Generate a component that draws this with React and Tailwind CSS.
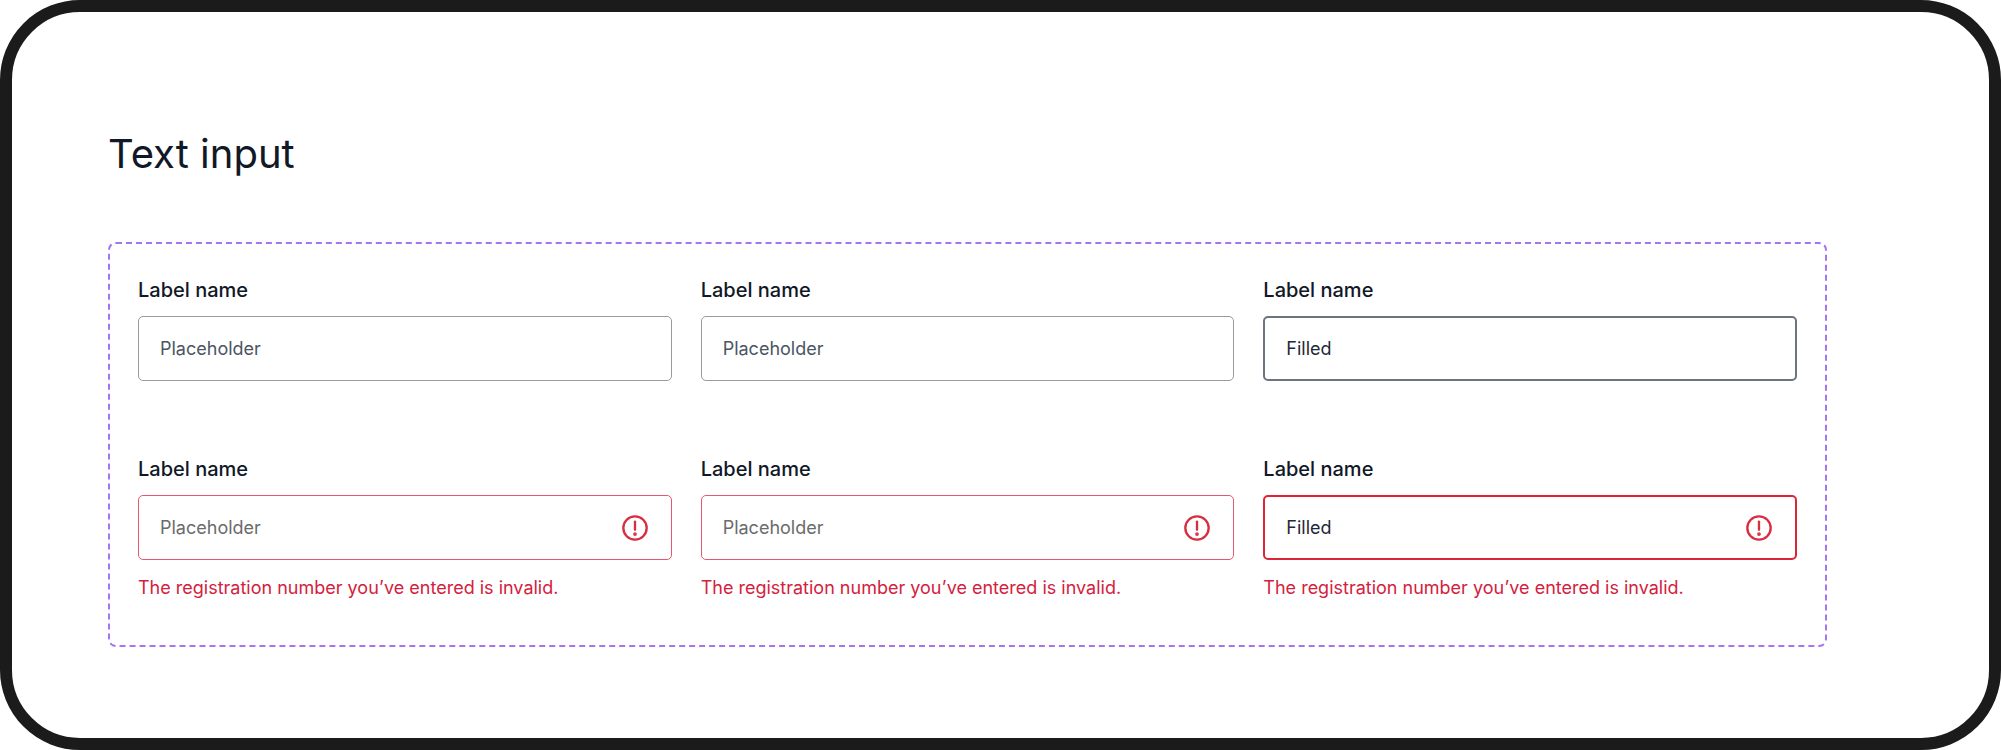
import React from 'react';

const font = { fontFamily: 'Inter, "Noto Sans", sans-serif' };

function AlertIcon() {
  return (
    <svg width="28" height="28" viewBox="0 0 24 24" fill="none" stroke="#d92d41" strokeWidth="2">
      <circle cx="12" cy="12" r="10" />
      <line x1="12" y1="6.5" x2="12" y2="13.5" strokeLinecap="round" />
      <circle cx="12" cy="17.2" r="0.6" fill="#d92d41" />
    </svg>
  );
}

function Field({ value, filled, error }) {
  const border = error
    ? filled ? 'border-[2.5px] border-[#dc2638]' : 'border-[1.5px] border-[#e35a6c]'
    : filled ? 'border-[2.5px] border-[#6b7480]' : 'border-[1.5px] border-[#9a9a9a]';
  return (
    <div className="flex flex-col">
      <p className="text-[20px] font-medium text-[#111827] leading-[24px] mb-[14px]">Label name</p>
      <div className={`h-[65px] rounded-[5px] flex items-center pl-[21px] pr-[22px] ${border}`}>
        <span className={`flex-1 text-[18px] ${filled ? 'text-[#1f2937]' : error ? 'text-[#6b6b6b]' : 'text-[#4b5563]'}`}>{value}</span>
        {error && <AlertIcon />}
      </div>
      {error && <p className="mt-[14px] text-[18px] text-[#d4213d]">The registration number you’ve entered is invalid.</p>}
    </div>
  );
}

export default function App() {
  return (
    <div style={font} className="w-[2001px] h-[750px] bg-white">
      <div className="w-full h-full bg-white border-[12px] border-[#1c1b1b] rounded-[80px] pl-[96px] pt-[118px]">
        <h1 className="text-[40px] text-[#111827] leading-[48px] font-normal">Text input</h1>
        <div className="mt-[64px] w-[1719px] h-[405px] border-2 border-dashed border-[#a574f5] rounded-[8px] px-[28px] pt-[34px] grid grid-cols-3 gap-x-[29px] gap-y-[76px] content-start">
          <Field value="Placeholder" />
          <Field value="Placeholder" />
          <Field value="Filled" filled />
          <Field value="Placeholder" error />
          <Field value="Placeholder" error />
          <Field value="Filled" filled error />
        </div>
      </div>
    </div>
  );
}
